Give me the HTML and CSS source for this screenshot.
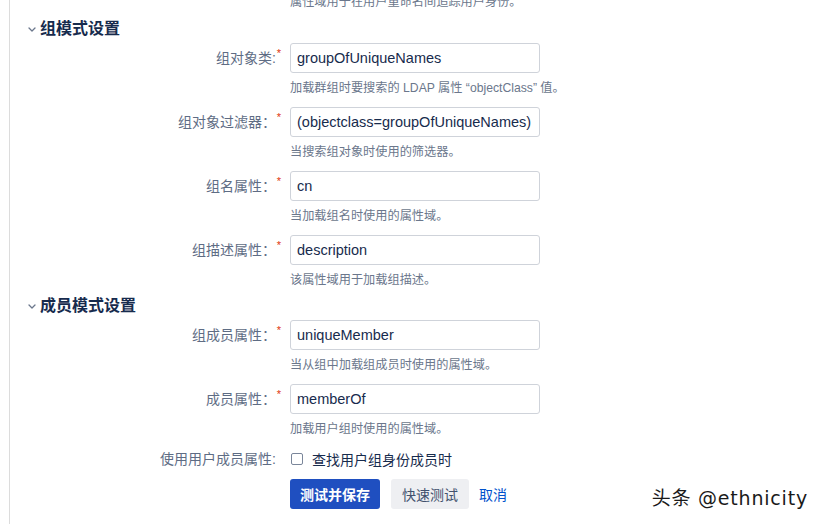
FILE: index.html
```html
<!DOCTYPE html>
<html lang="zh-CN">
<head>
<meta charset="utf-8">
<title>LDAP 设置</title>
<link rel="stylesheet" href="styles.css">
</head>
<body>
<div class="page">
  <div class="form">
    <div class="field field-top">
      <div class="label"></div>
      <div class="control"><div class="desc">属性域用于在用户重命名间追踪用户身份。</div></div>
    </div>

    <h3 class="section-title first"><svg class="chev" width="8" height="5" viewBox="0 0 8 5"><path d="M1 1l3 3 3-3" fill="none" stroke="#6b778c" stroke-width="1.3" stroke-linecap="round" stroke-linejoin="round"/></svg>组模式设置</h3>

    <div class="field">
      <div class="label"><span class="label-text">组对象类:</span><span class="req">*</span></div>
      <div class="control">
        <input class="text" type="text" value="groupOfUniqueNames">
        <div class="desc">加载群组时要搜索的 LDAP 属性 “objectClass” 值。</div>
      </div>
    </div>
    <div class="field">
      <div class="label"><span class="label-text">组对象过滤器：</span><span class="req">*</span></div>
      <div class="control">
        <input class="text" type="text" value="(objectclass=groupOfUniqueNames)">
        <div class="desc">当搜索组对象时使用的筛选器。</div>
      </div>
    </div>
    <div class="field">
      <div class="label"><span class="label-text">组名属性：</span><span class="req">*</span></div>
      <div class="control">
        <input class="text" type="text" value="cn">
        <div class="desc">当加载组名时使用的属性域。</div>
      </div>
    </div>
    <div class="field">
      <div class="label"><span class="label-text">组描述属性：</span><span class="req">*</span></div>
      <div class="control">
        <input class="text" type="text" value="description">
        <div class="desc">该属性域用于加载组描述。</div>
      </div>
    </div>

    <h3 class="section-title"><svg class="chev" width="8" height="5" viewBox="0 0 8 5"><path d="M1 1l3 3 3-3" fill="none" stroke="#6b778c" stroke-width="1.3" stroke-linecap="round" stroke-linejoin="round"/></svg>成员模式设置</h3>

    <div class="field">
      <div class="label"><span class="label-text">组成员属性：</span><span class="req">*</span></div>
      <div class="control">
        <input class="text" type="text" value="uniqueMember">
        <div class="desc">当从组中加载组成员时使用的属性域。</div>
      </div>
    </div>
    <div class="field">
      <div class="label"><span class="label-text">成员属性：</span><span class="req">*</span></div>
      <div class="control">
        <input class="text" type="text" value="memberOf">
        <div class="desc">加载用户组时使用的属性域。</div>
      </div>
    </div>

    <div class="field check-row">
      <div class="label"><span class="label-text">使用用户成员属性:</span></div>
      <div class="control check-control">
        <span class="checkbox"></span>
        <span class="check-text">查找用户组身份成员时</span>
      </div>
    </div>

    <div class="field buttons-row">
      <div class="label"></div>
      <div class="control buttons">
        <button class="btn btn-primary">测试并保存</button>
        <button class="btn btn-default">快速测试</button>
        <a class="btn-link">取消</a>
      </div>
    </div>
  </div>
  <div class="watermark">头条 @ethnicity</div>
</div>
</body>
</html>
```

FILE: styles.css
```css
* { box-sizing: border-box; }
html, body {
  margin: 0;
  padding: 0;
  background: #fff;
  overflow: hidden;
}
body {
  font-family: "Liberation Sans", "Noto Sans CJK SC", sans-serif;
  color: #172b4d;
  width: 822px;
  height: 524px;
}
.page {
  position: relative;
  margin-left: 9px;
  border-left: 1px solid #dcdcdc;
  height: 524px;
}
.form {
  display: flex;
  flex-direction: column;
}
.field {
  display: grid;
  grid-template-columns: 280px 250px;
  margin-top: 11px;
}
.field-top {
  margin-top: -6px;
}
.label {
  position: relative;
  text-align: right;
  padding-right: 14px;
  font-size: 14px;
  line-height: 30px;
  color: #5e6c84;
  white-space: nowrap;
}
.req {
  position: absolute;
  right: 9px;
  top: -5px;
  color: #de350b;
  font-size: 11px;
  line-height: 30px;
}
.control {
  display: flex;
  flex-direction: column;
}
input.text {
  width: 250px;
  height: 30px;
  border: 1px solid #cfd3da;
  border-radius: 3px;
  padding: 0 6px;
  font-family: "Liberation Sans", "Noto Sans CJK SC", sans-serif;
  font-size: 14.5px;
  color: #172b4d;
  background: #fff;
  outline: none;
}
.desc {
  margin-top: 7px;
  font-size: 12.2px;
  line-height: 16px;
  color: #6b778c;
  white-space: nowrap;
}
.field-top .desc { margin-top: 0; }
.section-title {
  margin: 9px 0 4px 0;
  padding-left: 18px;
  display: flex;
  align-items: center;
  font-size: 16px;
  line-height: 20px;
  font-weight: bold;
  color: #172b4d;
}
.section-title + .field { margin-top: 0; }
.section-title:not(.first) { margin-top: 8px; }
.chev {
  margin-right: 4px;
  margin-top: 1px;
}
.check-row { margin-top: 12px; }
.check-row .label {
  line-height: 20px;
  padding-right: 14px;
}
.check-control {
  flex-direction: row;
  align-items: center;
  height: 20px;
}
.checkbox {
  width: 12px;
  height: 12px;
  border: 1px solid #7a869a;
  border-radius: 2px;
  margin-left: 1px;
  margin-right: 9px;
  background: #fff;
}
.check-text {
  font-size: 14px;
  color: #172b4d;
  white-space: nowrap;
}
.buttons-row { margin-top: 10px; }
.buttons {
  flex-direction: row;
  align-items: center;
  gap: 11px;
}
.btn {
  height: 30px;
  border: none;
  border-radius: 3px;
  padding: 0 11px;
  font-family: "Liberation Sans", "Noto Sans CJK SC", sans-serif;
  font-size: 14px;
  white-space: nowrap;
}
.btn-primary {
  background: #1f4fc0;
  color: #fff;
  font-weight: bold;
  padding: 0 10px;
}
.btn-default {
  background: #eeeff2;
  color: #42526e;
}
.btn-link {
  color: #0052cc;
  font-size: 14px;
  margin-left: -1px;
}
.watermark {
  position: absolute;
  right: 14px;
  top: 486px;
  font-family: "DejaVu Sans", "Noto Sans CJK SC", sans-serif;
  font-size: 19px;
  letter-spacing: 0.8px;
  line-height: 24px;
  color: #1a1a1a;
  text-shadow: 0 0 1px #fff, 1px 1px 0 #fff, -1px -1px 0 #fff;
  white-space: nowrap;
}
```
